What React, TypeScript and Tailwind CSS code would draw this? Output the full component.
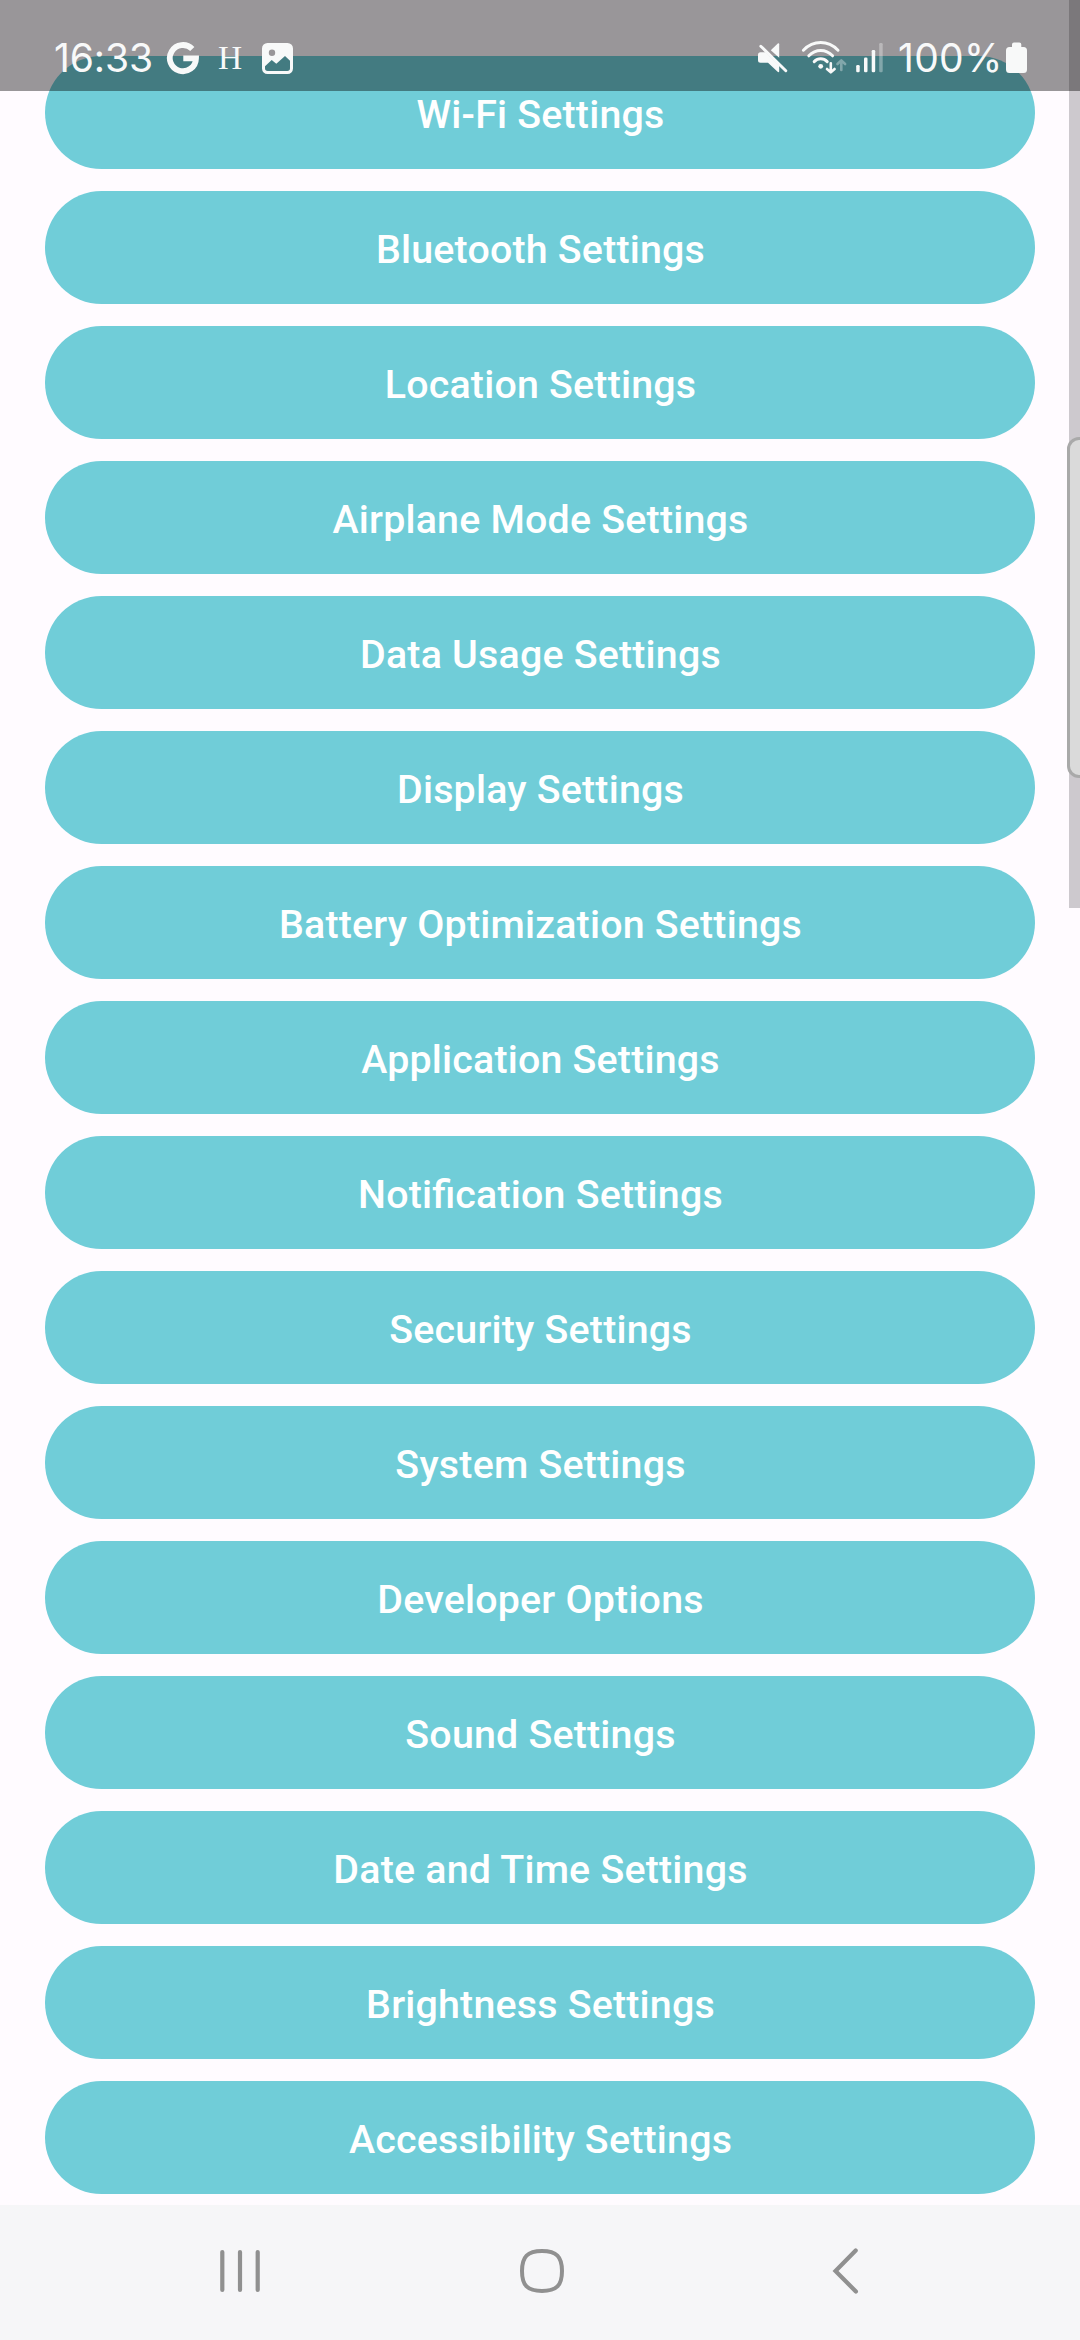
import { Fragment } from 'react';

const settings = [
  'Wi-Fi Settings',
  'Bluetooth Settings',
  'Location Settings',
  'Airplane Mode Settings',
  'Data Usage Settings',
  'Display Settings',
  'Battery Optimization Settings',
  'Application Settings',
  'Notification Settings',
  'Security Settings',
  'System Settings',
  'Developer Options',
  'Sound Settings',
  'Date and Time Settings',
  'Brightness Settings',
  'Accessibility Settings',
];

function GoogleIcon() {
  return (
    <svg width="34" height="91" viewBox="166 0 34 91" fill="none" stroke="currentColor" strokeWidth="5.8">
      <path d="M192.3 49A13.1 13.1 0 1 0 196 58.4H183.3" />
    </svg>
  );
}

function PhotoIcon() {
  return (
    <svg width="32" height="91" viewBox="262 0 32 91" fill="currentColor">
      <path
        fillRule="evenodd"
        d="M267.5 43H287.5a5.5 5.5 0 0 1 5.5 5.5V68.5a5.5 5.5 0 0 1-5.5 5.5H267.5a5.5 5.5 0 0 1-5.5-5.5V48.5a5.5 5.5 0 0 1 5.5-5.5ZM272 49.5a3.2 3.2 0 1 0 0 6.4a3.2 3.2 0 0 0 0-6.4ZM265 66.2V68.2a2.7 2.7 0 0 0 2.7 2.7H287.3a2.7 2.7 0 0 0 2.7-2.7V60.8L285 56L276.3 63.8L271.7 59.9Z"
      />
    </svg>
  );
}

function MuteIcon() {
  return (
    <svg width="32" height="91" viewBox="757 0 32 91" fill="currentColor">
      <path d="M770.8 50.2L777.8 43.4Q779.2 42.6 779.2 44.2V57.8Z" />
      <path d="M760.5 52.2H765.5L779.2 65.5V71Q779.2 73 777.6 71.8L768 62.7H760.5Q758 62.7 758 60.2V54.7Q758 52.2 760.5 52.2Z" />
      <path d="M760.8 46.2L785.8 70.7" stroke="currentColor" strokeWidth="2.9" strokeLinecap="round" />
    </svg>
  );
}

function WifiIcon() {
  return (
    <svg width="46" height="91" viewBox="801 0 46 91" fill="none" stroke="currentColor" strokeWidth="3" strokeLinecap="round" strokeLinejoin="round">
      <path d="M803.4 50.2Q811 42.6 820.7 42.6T838 50.2" />
      <path d="M808.8 55.8Q814 50.6 820.7 50.6T832.6 55.8" />
      <path d="M814.2 61.6Q817 58.8 820.7 58.8T827.2 61.6" />
      <circle cx="820.7" cy="66.3" r="2.4" fill="currentColor" stroke="none" />
      <path d="M830.8 63.2V72M827 69L830.8 72.4L834.6 69" strokeWidth="2.6" />
      <path d="M841.3 70V60.5M837.5 64L841.3 60.4L845.1 64" strokeWidth="2.6" opacity=".35" />
    </svg>
  );
}

function SignalIcon() {
  return (
    <svg width="28" height="91" viewBox="856 0 28 91" fill="currentColor">
      <rect x="856.2" y="65" width="3.5" height="7.3" rx="1.3" />
      <rect x="864" y="57.5" width="3.5" height="14.8" rx="1.3" />
      <rect x="871.7" y="50" width="3.5" height="22.3" rx="1.3" />
      <rect x="879.2" y="43" width="3.5" height="29.3" rx="1.3" opacity=".35" />
    </svg>
  );
}

function BatteryIcon() {
  return (
    <svg width="22" height="91" viewBox="1006 0 22 91" fill="currentColor">
      <path d="M1012 47V44.5Q1012 42.5 1014 42.5H1019.3Q1021.3 42.5 1021.3 44.5V47H1023.5Q1027 47 1027 50.5V69.5Q1027 73 1023.5 73H1009.5Q1006 73 1006 69.5V50.5Q1006 47 1009.5 47Z" />
    </svg>
  );
}

function StatusBar() {
  return (
    <div className="absolute inset-x-0 top-0 flex h-[91px] items-start justify-between bg-black/40 pr-[52px] pl-[54px] font-['Inter',sans-serif] text-[39px] text-[#f8f9f9]">
      <div className="flex items-start">
        <span className="w-[112px] leading-[116px] whitespace-nowrap tracking-[-0.1px]">16:33</span>
        <GoogleIcon />
        <span className="ml-[18px] w-[25px] font-['Liberation_Serif',serif] text-[33.5px] leading-[116px]">H</span>
        <span className="ml-[19px]"><PhotoIcon /></span>
      </div>
      <div className="flex items-start">
        <MuteIcon />
        <span className="ml-[12px]"><WifiIcon /></span>
        <span className="ml-[9px]"><SignalIcon /></span>
        <span className="ml-[14px] w-[108px] leading-[116px] whitespace-nowrap tracking-[0.3px]">100%</span>
        <BatteryIcon />
      </div>
    </div>
  );
}

function NavigationBar() {
  return (
    <nav className="flex h-[135px] shrink-0 items-center bg-[#f6f6f8] pb-[3px] pl-[218px] text-[#909090]">
      <button aria-label="Recent apps">
        <svg width="44" height="48" viewBox="218 2247 44 48" stroke="currentColor" strokeWidth="4.2" strokeLinecap="round">
          <path d="M222.3 2252V2290M240 2252V2290M257.7 2252V2290" />
        </svg>
      </button>
      <button aria-label="Home" className="ml-[256px]">
        <svg width="48" height="48" viewBox="518 2247 48 48" fill="none" stroke="currentColor" strokeWidth="4">
          <path d="M542 2251C556.5 2251 562 2256.5 562 2271S556.5 2291 542 2291S522 2285.5 522 2271S527.5 2251 542 2251Z" />
        </svg>
      </button>
      <button aria-label="Back" className="ml-[265px]">
        <svg width="28" height="48" viewBox="831 2247 28 48" fill="none" stroke="currentColor" strokeWidth="4.2" strokeLinecap="round">
          <path d="M855.7 2250.5L835.5 2271L855.9 2291.5" />
        </svg>
      </button>
    </nav>
  );
}

// Letter spacing turns ligatures off, so "fi" is set without it.
function Label({ text }: { text: string }) {
  return (
    <span>
      {text.split('fi').map((part, i) => (
        <Fragment key={i}>
          {i > 0 && <span className="tracking-normal">fi</span>}
          {part}
        </Fragment>
      ))}
    </span>
  );
}

export default function App() {
  return (
    <div className="relative flex h-[2340px] w-[1080px] flex-col overflow-hidden bg-[#fffbff] font-['Roboto',sans-serif]">
      <main className="flex flex-1 flex-col gap-[22px] px-[45px] pt-[56px]">
        {settings.map((label) => (
          <button
            key={label}
            className="flex h-[113px] shrink-0 items-center justify-center rounded-full bg-[#70cdd8] pt-[4px] pl-[1px] text-[39.375px] leading-[56px] font-medium tracking-[0.2px] text-white"
          >
            <Label text={label} />
          </button>
        ))}
      </main>
      <NavigationBar />
      <div className="absolute top-0 right-0 h-[908px] w-[11px] bg-[#cdc9ce]" />
      <div className="absolute top-[437px] -right-[20px] h-[341px] w-[33px] rounded-[12px] border-[3px] border-[#a9a9a9] bg-[#dadada]" />
      <StatusBar />
    </div>
  );
}
